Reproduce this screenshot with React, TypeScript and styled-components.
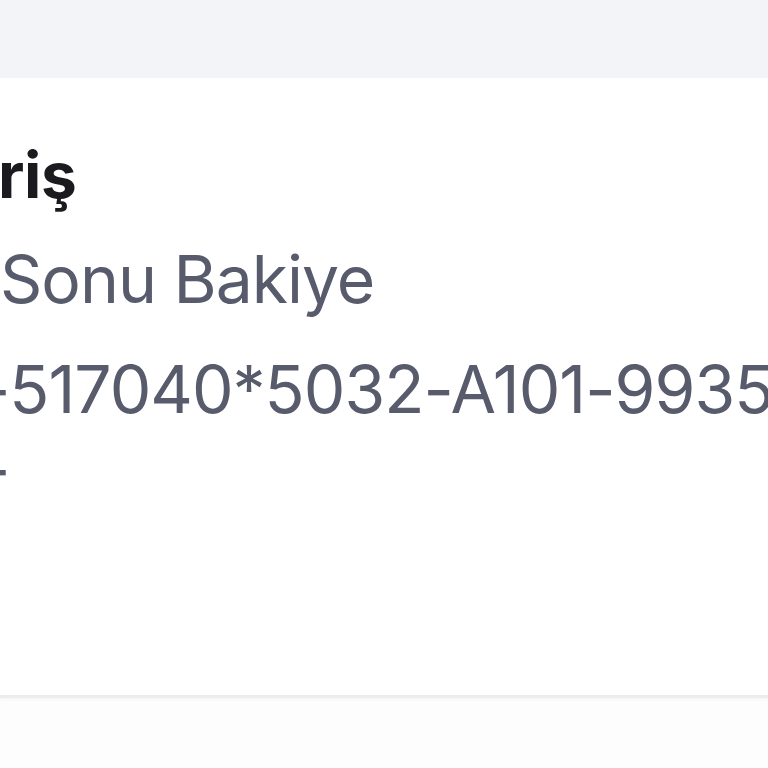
import React from 'react';
import styled, { createGlobalStyle } from 'styled-components';

const GlobalStyle = createGlobalStyle`
  html, body {
    margin: 0;
    padding: 0;
    background: #fdfdfd;
    font-family: Inter, "Noto Sans", "Liberation Sans", sans-serif;
    overflow: hidden;
  }
`;

const Page = styled.div`
  width: 768px;
  height: 768px;
  display: flex;
  flex-direction: column;
  overflow: hidden;
`;

const TopBar = styled.div`
  height: 78px;
  flex-shrink: 0;
  background: #f3f4f8;
`;

const Card = styled.section`
  height: 617px;
  flex-shrink: 0;
  background: #ffffff;
  border-bottom: 3px solid #ececec;
  box-shadow: 0 2px 3px rgba(0, 0, 0, 0.03);
  overflow: hidden;
  display: flex;
  flex-direction: column;
`;

const Title = styled.h2<{ $indent: number }>`
  margin: 0;
  margin-top: 57px;
  margin-left: ${(p) => p.$indent}px;
  font-size: 64px;
  font-weight: 700;
  line-height: 80px;
  letter-spacing: -0.5px;
  color: #1b1b1f;
  white-space: nowrap;
`;

const Line = styled.div<{ $indent: number; $gap: number }>`
  margin-top: ${(p) => p.$gap}px;
  margin-left: ${(p) => p.$indent}px;
  font-size: 66px;
  font-weight: 400;
  line-height: 80px;
  letter-spacing: -1px;
  color: #575b6b;
  white-space: nowrap;
`;

export default function App() {
  return (
    <Page>
      <GlobalStyle />
      <TopBar />
      <Card>
        <Title $indent={-2}>riş</Title>
        <Line $indent={0} $gap={24}>Sonu Bakiye</Line>
        <Line $indent={-20} $gap={30}>-517040*5032-A101-9935</Line>
        <Line $indent={-20} $gap={0}>-</Line>
      </Card>
    </Page>
  );
}
